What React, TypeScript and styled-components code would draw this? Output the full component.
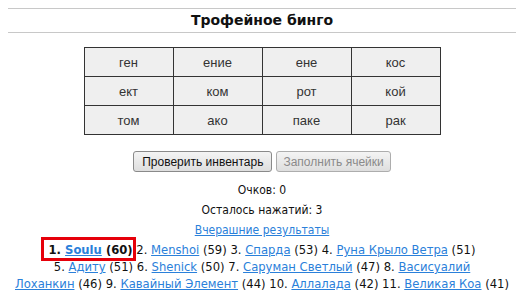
import React from "react";
import styled, { createGlobalStyle } from "styled-components";

const GlobalStyle = createGlobalStyle`
  html, body { background: #fff; }
  body {
    margin: 8px 5px 0 8px;
    font-family: "DejaVu Sans Condensed", "DejaVu Sans", Tahoma, sans-serif;
    font-size: 12px;
    color: #111;
  }
`;

const Page = styled.div`
  display: flex;
  flex-direction: column;
  align-items: stretch;
`;

const Header = styled.div`
  border-top: 1px solid #c8c8c8;
  border-bottom: 1px solid #c8c8c8;
  margin-right: -5px;
  padding-right: 5px;
  height: 23px;
  display: flex;
  justify-content: center;
`;

const Title = styled.h1`
  margin: 0;
  font-family: "DejaVu Sans", Verdana, sans-serif;
  font-size: 14px;
  font-weight: bold;
  line-height: 23px;
  color: #111;
`;

const Board = styled.table`
  margin: 14px auto 0;
  border-collapse: collapse;
  table-layout: fixed;
  width: 357px;
`;

const Cell = styled.td`
  border: 1px solid #333;
  background: #efefef;
  height: 28px;
  padding: 0;
  text-align: center;
  font-family: "Liberation Sans", Arial, sans-serif;
  font-size: 13px;
  color: #333;
`;

const ButtonRow = styled.div`
  margin-top: 16px;
  display: flex;
  justify-content: center;
  gap: 4px;
`;

const Button = styled.button<{ $disabled?: boolean }>`
  box-sizing: border-box;
  height: 21px;
  padding: 0 ${(p) => (p.$disabled ? 6 : 8)}px;
  font-family: "Liberation Sans", Arial, sans-serif;
  font-size: 12px;
  color: ${(p) => (p.$disabled ? "#8a8a8a" : "#111")};
  background: linear-gradient(#f4f4f4, #dedede);
  border: 1px solid ${(p) => (p.$disabled ? "#adadad" : "#8a8a8a")};
  border-radius: 3px;
`;

const Info = styled.div`
  margin-top: 8px;
  display: flex;
  flex-direction: column;
  align-items: center;
  line-height: 20px;
`;

const Link = styled.a`
  color: #2a80da;
  text-decoration: underline;
  cursor: pointer;
`;

const Leaders = styled.p`
  margin: 2px 0 0;
  text-align: center;
  line-height: 17px;
  font-family: "DejaVu Sans", Verdana, sans-serif;
  font-size: 11.6px;
`;

const Winner = styled.span`
  position: relative;
  font-weight: bold;
  &::after {
    content: "";
    position: absolute;
    left: -8px;
    right: -3px;
    top: -6px;
    bottom: -4px;
    border: 3px solid #e6000a;
    pointer-events: none;
  }
`;

const grid = [
  ["ген", "ение", "ене", "кос"],
  ["ект", "ком", "рот", "кой"],
  ["том", "ако", "паке", "рак"],
];

type Entry = { name: React.ReactNode; score: number; breakAfter?: boolean };

const leaders: Entry[] = [
  { name: "Menshoi", score: 59 },
  { name: "Спарда", score: 53 },
  { name: "Руна Крыло Ветра", score: 51, breakAfter: true },
  { name: "Адиту", score: 51 },
  { name: "Shenick", score: 50 },
  { name: "Саруман Светлый", score: 47 },
  {
    name: (
      <>
        Васисуалий
        <br />
        Лоханкин
      </>
    ),
    score: 46,
  },
  { name: "Кавайный Элемент", score: 44 },
  { name: "Аллалада", score: 42 },
  { name: "Великая Коа", score: 41 },
];

export default function App() {
  return (
    <Page>
      <GlobalStyle />
      <Header>
        <Title>Трофейное бинго</Title>
      </Header>
      <Board>
        <tbody>
          {grid.map((row, i) => (
            <tr key={i}>
              {row.map((c, j) => (
                <Cell key={j}>{c}</Cell>
              ))}
            </tr>
          ))}
        </tbody>
      </Board>
      <ButtonRow>
        <Button>Проверить инвентарь</Button>
        <Button $disabled>Заполнить ячейки</Button>
      </ButtonRow>
      <Info>
        <div>Очков: 0</div>
        <div>Осталось нажатий: 3</div>
        <Link>Вчерашние результаты</Link>
      </Info>
      <Leaders>
        <Winner>
          1. <Link>Soulu</Link> (60)
        </Winner>{" "}
        {leaders.map((e, i) => (
          <React.Fragment key={i}>
            {i + 2}. <Link>{e.name}</Link> ({e.score})
            {e.breakAfter ? <br /> : " "}
          </React.Fragment>
        ))}
      </Leaders>
    </Page>
  );
}
